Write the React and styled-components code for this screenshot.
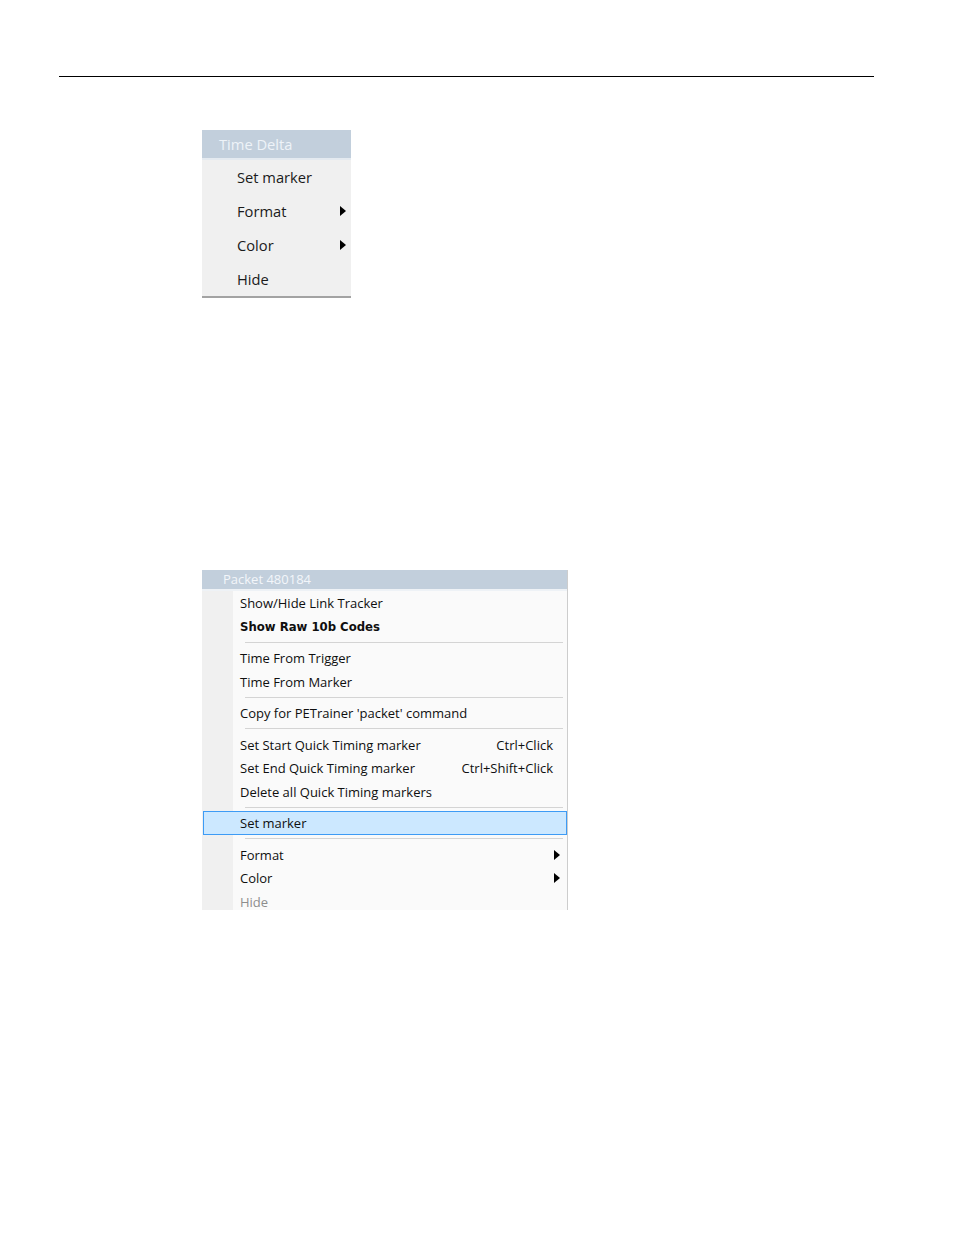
import React from "react";
import styled, { createGlobalStyle } from "styled-components";

const Global = createGlobalStyle`
  html, body { margin: 0; padding: 0; background: #ffffff; }
  body { font-family: "Open Sans", "Noto Sans", sans-serif; }
`;

const Page = styled.div`
  width: 954px;
  height: 1235px;
  display: flex;
  flex-direction: column;
  padding-top: 76px;
  box-sizing: border-box;
`;

const Rule = styled.div`
  margin-left: 59px;
  width: 815px;
  height: 1px;
  background: #000;
`;

const Arrow = styled.span`
  width: 0;
  height: 0;
  border-top: 5px solid transparent;
  border-bottom: 5px solid transparent;
  border-left: 6px solid #000;
`;

/* ---- Small menu ---- */
const SmallMenu = styled.div`
  margin: 53px 0 0 202px;
  width: 149px;
  display: flex;
  flex-direction: column;
  background: #f0f0f0;
  border-bottom: 2px solid #a3a3a3;
`;

const SmallHeader = styled.div`
  height: 28px;
  background: #c2cfdc;
  border-bottom: 2px solid #e4eaf0;
  color: #eef3f8;
  font-family: "Open Sans", sans-serif;
  font-size: 14.7px;
  line-height: 28px;
  padding-left: 17px;
`;

const SmallItem = styled.div`
  height: 34px;
  display: flex;
  align-items: center;
  justify-content: space-between;
  padding: 0 5px 0 35px;
  font-family: "Open Sans", sans-serif;
  font-size: 14.7px;
  color: #1b1b1b;
`;

/* ---- Big menu ---- */
const BigMenu = styled.div`
  margin: 272px 0 0 202px;
  width: 366px;
  height: 340px;
  overflow: hidden;
  display: flex;
  flex-direction: column;
  border-right: 1px solid #cdcdcd;
  box-sizing: border-box;
  background: linear-gradient(to right, #f0f0f0 0 31px, #fafafa 31px);
`;

const BigHeader = styled.div`
  height: 19px;
  flex: none;
  background: #c2cfdc;
  border-bottom: 2px solid #eef2f6;
  color: #f3f6fa;
  font-family: "Open Sans", sans-serif;
  font-size: 13px;
  line-height: 19px;
  padding-left: 21px;
`;

const BigItem = styled.div`
  height: 23.5px;
  flex: none;
  display: flex;
  align-items: center;
  padding: 1px 6px 0 37px;
  margin-left: 1px;
  font-family: ${(p) => (p.$bold ? '"DejaVu Sans", sans-serif' : '"Open Sans", sans-serif')};
  font-weight: ${(p) => (p.$bold ? 700 : 400)};
  font-size: ${(p) => (p.$bold ? "11.7px" : "13px")};
  color: ${(p) => (p.$disabled ? "#8d8d8d" : "#0f0f0f")};
  box-sizing: border-box;
  background: ${(p) => (p.$active ? "#cce8ff" : "transparent")};
  border: 1px solid ${(p) => (p.$active ? "#3d9bf5" : "transparent")};
  border-left-width: ${(p) => (p.$active ? "1px" : "0")};
  padding-left: ${(p) => (p.$active ? "36px" : "37px")};
`;

const Label = styled.span`
  flex: 1;
`;

const Shortcut = styled.span`
  margin-right: 7px;
`;

const Separator = styled.div`
  height: 8px;
  flex: none;
  display: flex;
  align-items: center;
  padding: 0 4px 0 43px;
  &::after {
    content: "";
    flex: 1;
    height: 1px;
    background: #d4d4d4;
  }
`;

function Item({ children, shortcut, arrow, ...rest }) {
  return (
    <BigItem {...rest}>
      <Label>{children}</Label>
      {shortcut && <Shortcut>{shortcut}</Shortcut>}
      {arrow && <Arrow />}
    </BigItem>
  );
}

export default function App() {
  return (
    <>
      <Global />
      <Page>
        <Rule />
        <SmallMenu>
          <SmallHeader>Time Delta</SmallHeader>
          <SmallItem>Set marker</SmallItem>
          <SmallItem>
            Format <Arrow />
          </SmallItem>
          <SmallItem>
            Color <Arrow />
          </SmallItem>
          <SmallItem>Hide</SmallItem>
        </SmallMenu>

        <BigMenu>
          <BigHeader>Packet 480184</BigHeader>
          <Item>Show/Hide Link Tracker</Item>
          <Item $bold>Show Raw 10b Codes</Item>
          <Separator />
          <Item>Time From Trigger</Item>
          <Item>Time From Marker</Item>
          <Separator />
          <Item>Copy for PETrainer 'packet' command</Item>
          <Separator />
          <Item shortcut="Ctrl+Click">Set Start Quick Timing marker</Item>
          <Item shortcut="Ctrl+Shift+Click">Set End Quick Timing marker</Item>
          <Item>Delete all Quick Timing markers</Item>
          <Separator />
          <Item $active>Set marker</Item>
          <Separator />
          <Item arrow>Format</Item>
          <Item arrow>Color</Item>
          <Item $disabled>Hide</Item>
        </BigMenu>
      </Page>
    </>
  );
}
